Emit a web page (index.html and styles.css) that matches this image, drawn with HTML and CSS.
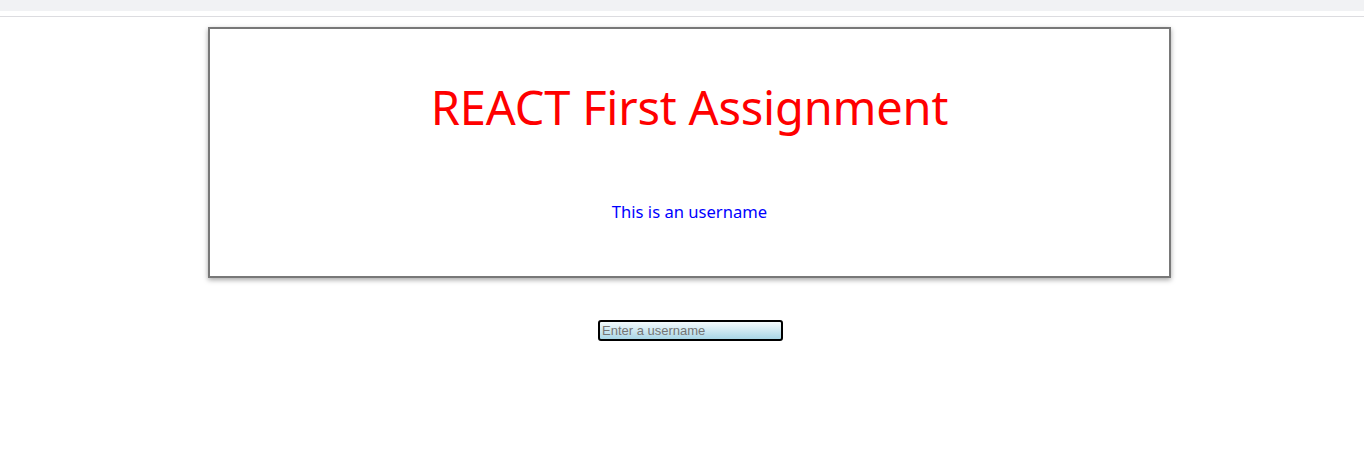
FILE: index.html
```html
<!DOCTYPE html>
<html>
<head>
<meta charset="utf-8">
<link rel="stylesheet" href="styles.css">
</head>
<body>
<div class="topbar"></div>
<div class="topline"></div>
<div class="app">
  <div class="card">
    <h1 class="title">REACT First Assignment</h1>
    <p class="username">This is an username</p>
  </div>
  <input class="user-input" type="text" placeholder="Enter a username">
</div>
</body>
</html>
```
FILE: styles.css
```css
html, body {
  margin: 0;
  padding: 0;
  background: #ffffff;
}
.topbar {
  height: 11px;
  background: #f1f2f4;
}
.topline {
  margin-top: 5px;
  height: 1px;
  background: #dcdce0;
}
.app {
  width: 963px;
  margin-left: 208px;
  padding-top: 10px;
  display: flex;
  flex-direction: column;
  align-items: center;
}
.card {
  box-sizing: border-box;
  width: 963px;
  height: 251px;
  border: 2px solid #787878;
  box-shadow: 0 2px 5px rgba(0,0,0,0.35);
  display: flex;
  flex-direction: column;
  align-items: center;
  font-family: "Noto Sans", sans-serif;
}
.title {
  margin: 48px 0 0 0;
  font-size: 47px;
  letter-spacing: -0.2px;
  font-weight: 400;
  line-height: 60px;
  color: #ff0000;
}
.username {
  margin: 63px 0 0 0;
  font-size: 16.6px;
  line-height: 24px;
  color: #0000ff;
}
.user-input {
  box-sizing: border-box;
  margin-top: 42px;
  margin-left: 2px;
  width: 185px;
  height: 21px;
  border: 2px solid #000000;
  border-radius: 3px;
  padding: 0 2px;
  font-family: "Liberation Sans", Arial, sans-serif;
  font-size: 13px;
  background: linear-gradient(to bottom, #f4fafc, #a9d6e6);
  outline: none;
}
.user-input::placeholder {
  color: #757575;
}
```
